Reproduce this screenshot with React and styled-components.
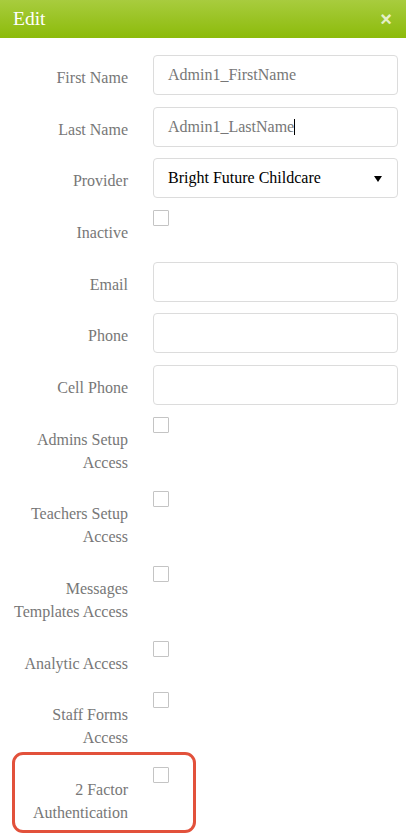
import React from 'react';
import styled, { createGlobalStyle, css } from 'styled-components';

const GlobalStyle = createGlobalStyle`
  html, body {
    margin: 0;
    padding: 0;
    background: #fff;
    overflow: hidden;
  }
  body {
    font-family: "Liberation Serif", "Times New Roman", serif;
  }
`;

const rows = [
  { label: 'First Name', type: 'text', value: 'Admin1_FirstName' },
  { label: 'Last Name', type: 'text', value: 'Admin1_LastName', caret: true },
  { label: 'Provider', type: 'select', value: 'Bright Future Childcare' },
  { label: 'Inactive', type: 'check' },
  { label: 'Email', type: 'text', value: '' },
  { label: 'Phone', type: 'text', value: '' },
  { label: 'Cell Phone', type: 'text', value: '' },
  { label: 'Admins Setup Access', type: 'check' },
  { label: 'Teachers Setup Access', type: 'check' },
  { label: 'Messages Templates Access', type: 'check' },
  { label: 'Analytic Access', type: 'check' },
  { label: 'Staff Forms Access', type: 'check' },
  { label: '2 Factor Authentication', type: 'check', highlight: true },
];

const App = () => {
  return (
    <Modal>
      <GlobalStyle />
      <Header>
        <Title>Edit</Title>
        <Close>×</Close>
      </Header>

      <Form>
        {rows.map(row => (
          <Row key={row.label} highlight={row.highlight}>
            <Label>{row.label}</Label>
            {row.type === 'check' && <Checkbox />}
            {row.type === 'text' && (
              <Field>
                {row.value}
                {row.caret && <Caret />}
              </Field>
            )}
            {row.type === 'select' && (
              <Field dark>
                {row.value}
                <Arrow width="8" height="6" viewBox="0 0 8 6">
                  <polygon points="0,0 8,0 4,6" fill="#000" />
                </Arrow>
              </Field>
            )}
          </Row>
        ))}
      </Form>
    </Modal>
  );
};

export default App;

const Modal = styled.div`
  width: 406px;
  height: 838px;
  overflow: hidden;
  background: #fff;
`;

const Header = styled.div`
  height: 38px;
  display: flex;
  align-items: center;
  justify-content: space-between;
  padding: 0 13px;
  box-sizing: border-box;
  background: linear-gradient(to bottom, #a8cc3e, #8cbb0a);
`;

const Title = styled.h2`
  margin: 0;
  font-size: 19.5px;
  font-weight: normal;
  color: #fff;
  line-height: 38px;
`;

const Close = styled.span`
  font-family: "Liberation Sans", Arial, sans-serif;
  font-size: 20px;
  font-weight: bold;
  color: rgba(255, 255, 255, 0.75);
  line-height: 1;
  margin-right: 1px;
`;

const Form = styled.div`
  display: flex;
  flex-direction: column;
  gap: 11.67px;
  padding: 17px 8px 0 0;
`;

const Row = styled.div`
  position: relative;
  display: grid;
  grid-template-columns: 128px 245px;
  column-gap: 25px;
  align-items: start;

  ${p => p.highlight && css`
    &::after {
      content: '';
      position: absolute;
      left: 12px;
      top: -15px;
      width: 184px;
      height: 81px;
      box-sizing: border-box;
      border: 3px solid #e2513b;
      border-radius: 11px;
      pointer-events: none;
    }
  `}
`;

const Label = styled.label`
  box-sizing: border-box;
  padding: 11px 0 6px 8px;
  min-height: 40px;
  text-align: right;
  font-size: 16px;
  line-height: 23px;
  color: #777;
`;

const Field = styled.div`
  position: relative;
  height: 40px;
  box-sizing: border-box;
  border: 1px solid #dcdcdc;
  border-radius: 4px;
  padding: 0 14px;
  display: flex;
  align-items: center;
  font-size: 16px;
  color: ${p => (p.dark ? '#000' : '#777')};
  background: #fff;
`;

const Caret = styled.span`
  display: inline-block;
  width: 1px;
  height: 16px;
  background: #000;
`;

const Arrow = styled.svg`
  position: absolute;
  right: 15px;
  top: 17px;
`;

const Checkbox = styled.span`
  display: block;
  width: 16px;
  height: 16px;
  box-sizing: border-box;
  border: 1px solid #c4c4c4;
  border-radius: 1px;
  background: #fff;
`;
